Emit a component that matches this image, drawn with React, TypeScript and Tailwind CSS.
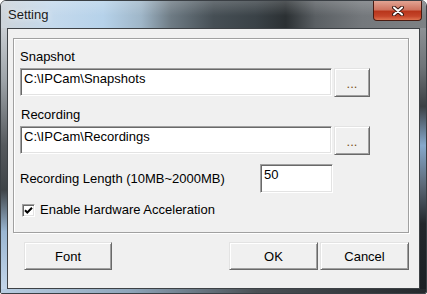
import React from 'react';

const font = "font-['Liberation_Sans',Arial,sans-serif] text-[13px] leading-[15px] text-black";
const sunken =
  'bg-white border border-[#a0a0a0] border-r-white border-b-white shadow-[inset_1px_1px_0_#696969,inset_-1px_-1px_0_#e3e3e3]';
const raised =
  'bg-[#f0f0f0] border border-[#e3e3e3] border-r-[#696969] border-b-[#696969] shadow-[inset_1px_1px_0_#fff,inset_-1px_-1px_0_#a0a0a0]';

function PathRow({ value }: { value: string }) {
  return (
    <div className="flex items-start gap-[2px] mt-[4px]">
      <div className={`${sunken} w-[312px] h-[28px] pl-[3px] pt-[2px]`}>{value}</div>
      <div className={`${raised} w-[36px] h-[29px] flex items-center justify-center pt-[1px] text-[#7a5020]`}>...</div>
    </div>
  );
}

function Button({ label, w }: { label: string; w: string }) {
  return <div className={`${raised} ${w} h-[28px] flex items-center justify-center`}>{label}</div>;
}

export default function App() {
  return (
    <div className="w-[427px] h-[294px] bg-white">
      <div
        className={`${font} w-[427px] h-[294px] flex flex-col border border-[#3a3f44] rounded-t-[6px] rounded-b-[2px] overflow-hidden`}
      >
        {/* title bar */}
        <div className="h-[27px] shrink-0 flex items-start bg-[linear-gradient(to_bottom,rgba(255,255,255,0.18),rgba(255,255,255,0)_55%),linear-gradient(to_right,#cdd4da_0%,#c4d9ec_12%,#b6d2ea_24%,#9fb6c8_33%,#6e7b84_40%,#464f55_50%,#3a4247_60%,#2b3033_67%,#5a5f63_74%,#74787c_85%,#7d8184_100%)]">
          <span className="pl-[7px] pt-[6px] text-[#1a1a1a] [text-shadow:0_0_6px_rgba(255,255,255,0.95)]">Setting</span>
          <div className="ml-auto mr-[4px] w-[49px] h-[20px] rounded-b-[4px] border border-t-0 border-[#4a1c12] bg-[linear-gradient(to_bottom,#e2a493_0%,#cf7561_45%,#b9361c_55%,#c5452a_80%,#de7350_100%)] flex items-center justify-center">
            <svg width="12" height="10" viewBox="0 0 12 10">
              <path d="M2 1.5 L10 8.5 M10 1.5 L2 8.5" stroke="#3a1a14" strokeWidth="4" strokeLinecap="round" />
              <path d="M2 1.5 L10 8.5 M10 1.5 L2 8.5" stroke="#ffffff" strokeWidth="2" strokeLinecap="round" />
            </svg>
          </div>
        </div>

        <div className="flex-1 flex flex-col">
          <div className="flex-1 flex">
            <div className="w-[6px] bg-[linear-gradient(to_bottom,#c9ced3_0%,#9ea4a9_20%,#55595d_45%,#3e4347_62%,#9ab6d2_78%,#c3d6ea_100%)]" />
            {/* client area */}
            <div className="flex-1 border border-[#3d4145] bg-[#f0f0f0] flex flex-col pl-[5px] pr-[10px] pt-[9px]">
              <div className="w-[396px] h-[195px] border border-[#a0a0a0] shadow-[inset_1px_1px_0_#fff,1px_1px_0_#fff] flex flex-col pl-[6px] pt-[10px]">
                <div>Snapshot</div>
                <PathRow value="C:\IPCam\Snapshots" />
                <div className="mt-[10px] pl-[1px]">Recording</div>
                <PathRow value="C:\IPCam\Recordings" />
                <div className="flex items-center mt-[9px]">
                  <div className="w-[240px]">Recording Length (10MB~2000MB)</div>
                  <div className={`${sunken} w-[73px] h-[29px] pl-[3px] pt-[2px]`}>50</div>
                </div>
                <div className="flex items-start mt-[9px] ml-[2px]">
                  <div className={`${sunken} w-[13px] h-[13px] mt-[2px] flex items-center justify-center`}>
                    <svg width="9" height="9" viewBox="0 0 9 9">
                      <path d="M1 4.2 L3.3 6.5 L8 1.8" stroke="#000" strokeWidth="2" fill="none" />
                    </svg>
                  </div>
                  <span className="ml-[5px]">Enable Hardware Acceleration</span>
                </div>
              </div>
              <div className="flex mt-[9px] w-[396px]">
                <div className="ml-[11px]">
                  <Button label="Font" w="w-[88px]" />
                </div>
                <div className="ml-auto flex gap-[2px]">
                  <Button label="OK" w="w-[89px]" />
                  <Button label="Cancel" w="w-[89px]" />
                </div>
              </div>
            </div>
            <div className="w-[6px] bg-[linear-gradient(to_bottom,#8d9195_0%,#6f7478_15%,#3b4044_30%,#86a9cc_45%,#5d6a78_60%,#23272b_75%,#1c2024_100%)]" />
          </div>
          <div className="h-[4px] bg-[linear-gradient(to_right,#b8cde2_0%,#8fa6bb_30%,#4b5055_60%,#24282c_100%)]" />
        </div>
      </div>
    </div>
  );
}
